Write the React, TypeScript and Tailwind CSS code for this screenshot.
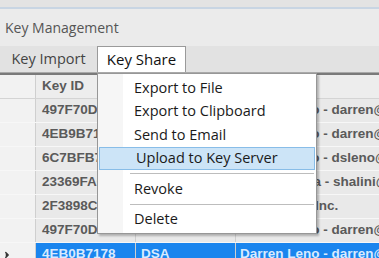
import { ChevronRight } from 'lucide-react'

const rows = [
  { id: '497F70D3D...', type: 'DSA', user: 'Darren Leno - darren@leno.com' },
  { id: '4EB9B7178...', type: 'DSA', user: 'Darren Leno - darren@leno.com' },
  { id: '6C7BFB7A2...', type: 'RSA', user: 'Darren Leno - dsleno@gmail.com' },
  { id: '23369FA04...', type: 'RSA', user: 'Shalini Rana - shalini@abc.com' },
  { id: '2F3898C11...', type: 'DSA', user: 'Leno Labs, Inc.' },
  { id: '497F70D3D...', type: 'DSA', user: 'Darren Leno - darren@leno.com' },
  { id: '4EB0B7178', type: 'DSA', user: 'Darren Leno - darren@leno.com', selected: true },
]

const menu = [
  { label: 'Export to File' },
  { label: 'Export to Clipboard' },
  { label: 'Send to Email' },
  { label: 'Upload to Key Server', active: true },
  { sep: true },
  { label: 'Revoke' },
  { sep: true },
  { label: 'Delete' },
]

export default function App() {
  return (
    <div className="relative w-[379px] h-[258px] overflow-hidden bg-[#ebebeb] font-['Segoe_UI','Open_Sans','Noto_Sans',sans-serif]">
      {/* window chrome */}
      <div className="h-[9px] bg-[#e3e3e3] border-b-2 border-[#c8d5e3]" />
      <div className="h-[37px] flex items-center pl-[5px] text-[14px] text-[#555]">Key Management</div>

      {/* tabs */}
      <div className="h-[27px] flex items-end bg-[#e2e2e2] border-b border-[#a9a9a9]">
        <div className="w-[97px] h-full flex items-center justify-center text-[14.5px] text-[#444]">Key Import</div>
        <div className="w-[89px] h-[26px] flex items-center justify-center text-[15px] text-[#111] bg-white border border-b-0 border-[#9a9a9a]">
          Key Share
        </div>
      </div>

      {/* grid */}
      <div className="border-t-2 border-[#7a7a7a] font-['Liberation_Sans',sans-serif] text-[13.5px] font-bold text-[#5a5a5a]">
        <div className="flex h-[24px] border-b border-[#d4d4d4] bg-[#ededed]">
          <div className="w-[36px] border-r border-[#cfcfcf] bg-[#f2f2f2]" />
          <div className="w-[100px] border-r border-[#cfcfcf] flex items-center pl-[6px]">Key ID</div>
          <div className="w-[100px] border-r border-[#cfcfcf] flex items-center pl-[6px]">Type</div>
          <div className="flex-1 flex items-center pl-[4px]">User ID</div>
        </div>
        {rows.map((r, i) => (
          <div
            key={i}
            className={`flex h-[24px] border-b ${r.selected ? 'border-[#1a85ee] bg-[#1a85ee] text-[#d8ebff]' : 'border-[#f7f7f7] bg-[#e9e9e9]'}`}
          >
            <div className="w-[36px] shrink-0 border-r border-[#cfcfcf] bg-[#f2f2f2] flex items-center pl-[2px] text-[#333]">
              {r.selected && <ChevronRight size={10} strokeWidth={3} fill="#333" />}
            </div>
            <div className="w-[100px] shrink-0 border-r border-[#cfcfcf] flex items-center pl-[6px] whitespace-nowrap overflow-hidden">
              {r.id}
            </div>
            <div className="w-[100px] shrink-0 border-r border-[#cfcfcf] flex items-center pl-[5px]">{r.type}</div>
            <div className="flex-1 flex items-center pl-[4px] whitespace-nowrap overflow-hidden">{r.user}</div>
          </div>
        ))}
      </div>

      {/* dropdown menu */}
      <div className="absolute left-[97px] top-[73px] w-[220px] bg-white border border-[#979797] shadow-[2px_2px_2px_rgba(0,0,0,0.25)] py-[2px]">
        <div className="absolute left-0 top-0 bottom-0 w-[25px] bg-[#f6f6f6]" />
        {menu.map((m, i) =>
          m.sep ? (
            <div key={i} className="relative h-[7px] flex items-center pl-[32px] pr-[2px]">
              <div className="h-px w-full bg-[#bdbdbd]" />
            </div>
          ) : (
            <div
              key={i}
              className={`relative h-[23.5px] flex items-center pl-[36px] text-[14.5px] text-[#1a1a1a] ${m.active ? 'bg-[#cce4f7] border border-[#88bde8] mx-[1px] pl-[35px]' : ''}`}
            >
              {m.label}
            </div>
          )
        )}
      </div>
    </div>
  )
}
